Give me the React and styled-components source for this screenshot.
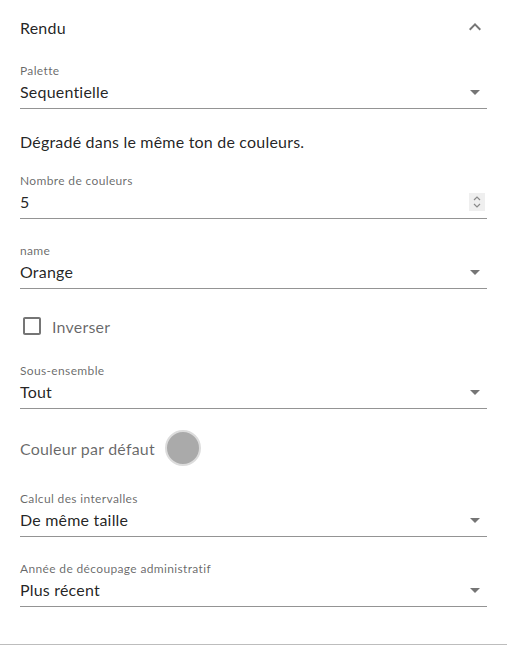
import styled, { createGlobalStyle } from "styled-components";

const GlobalStyle = createGlobalStyle`
  html, body {
    margin: 0;
    padding: 0;
    background: #fff;
  }
  body {
    font-family: Lato, "Open Sans", sans-serif;
    color: rgba(0, 0, 0, 0.87);
    letter-spacing: 0.2px;
  }
`;

const Panel = styled.section`
  width: 507px;
  box-sizing: border-box;
  border-bottom: 1px solid #bdbdbd;
`;

const Header = styled.div`
  height: 54px;
  padding: 0 20px;
  display: flex;
  align-items: center;
  justify-content: space-between;
  font-size: 16px;
`;

const Body = styled.div`
  padding: 9px 20px 37px;
  display: flex;
  flex-direction: column;
`;

const Field = styled.div`
  display: flex;
  flex-direction: column;
  margin-top: ${(p) => p.$top ?? 24}px;
`;

const Label = styled.div`
  font-size: 12px;
  line-height: 16px;
  letter-spacing: 0.35px;
  color: rgba(0, 0, 0, 0.6);
`;

const ValueRow = styled.div`
  display: flex;
  align-items: center;
  justify-content: space-between;
  height: 26px;
  padding-bottom: 3px;
  border-bottom: 1px solid rgba(0, 0, 0, 0.42);
  font-size: 16px;
  line-height: 26px;
`;

const Description = styled.p`
  margin: 21px 0 19px;
  font-size: 16px;
  line-height: 24px;
`;

const Spinner = styled.div`
  width: 16px;
  height: 18px;
  margin-right: 2px;
  background: #efefef;
  display: flex;
  align-items: center;
  justify-content: center;
`;

const CheckRow = styled.label`
  display: flex;
  align-items: center;
  height: 42px;
  margin: 16px 0;
  gap: 8px;
  font-size: 16px;
  color: rgba(0, 0, 0, 0.6);
`;

const ColorRow = styled.div`
  display: flex;
  align-items: center;
  height: 40px;
  margin: 19px 0 -1px;
  gap: 10px;
  font-size: 16px;
  color: rgba(0, 0, 0, 0.6);
`;

const Swatch = styled.span`
  width: 32px;
  height: 32px;
  border-radius: 50%;
  background: ${(p) => p.$color};
  border: 2px solid #dcdcdc;
`;

const Icon = styled.svg`
  width: 24px;
  height: 24px;
  fill: rgba(0, 0, 0, 0.54);
  flex-shrink: 0;
`;

const ExpandLess = () => (
  <Icon viewBox="0 0 24 24">
    <path d="M12 8l-6 6 1.41 1.41L12 10.83l4.59 4.58L18 14z" />
  </Icon>
);

const ArrowDropDown = () => (
  <Icon viewBox="0 0 24 24">
    <path d="M7 10l5 5 5-5z" />
  </Icon>
);

const CheckBoxBlank = () => (
  <Icon viewBox="0 0 24 24">
    <path d="M19 5v14H5V5h14m0-2H5c-1.11 0-2 .9-2 2v14c0 1.1.89 2 2 2h14c1.1 0 2-.9 2-2V5c0-1.1-.9-2-2-2z" />
  </Icon>
);

const SpinIcon = () => (
  <svg width="10" height="14" viewBox="0 0 10 14" fill="none" stroke="#8a8a8a" strokeWidth="1.2">
    <path d="M2 5l3-3 3 3" />
    <path d="M2 9l3 3 3-3" />
  </svg>
);

function SelectField({ label, value, top }) {
  return (
    <Field $top={top}>
      <Label>{label}</Label>
      <ValueRow>
        <span>{value}</span>
        <ArrowDropDown />
      </ValueRow>
    </Field>
  );
}

export default function App() {
  return (
    <>
      <GlobalStyle />
      <Panel>
        <Header>
          <span>Rendu</span>
          <ExpandLess />
        </Header>
        <Body>
          <SelectField label="Palette" value="Sequentielle" top={0} />
          <Description>Dégradé dans le même ton de couleurs.</Description>
          <Field $top={0}>
            <Label>Nombre de couleurs</Label>
            <ValueRow>
              <span>5</span>
              <Spinner>
                <SpinIcon />
              </Spinner>
            </ValueRow>
          </Field>
          <SelectField label="name" value="Orange" />
          <CheckRow>
            <CheckBoxBlank />
            Inverser
          </CheckRow>
          <SelectField label="Sous-ensemble" value="Tout" top={0} />
          <ColorRow>
            Couleur par défaut
            <Swatch $color="#aaaaaa" />
          </ColorRow>
          <SelectField label="Calcul des intervalles" value="De même taille" />
          <SelectField label="Année de découpage administratif" value="Plus récent" />
        </Body>
      </Panel>
    </>
  );
}
